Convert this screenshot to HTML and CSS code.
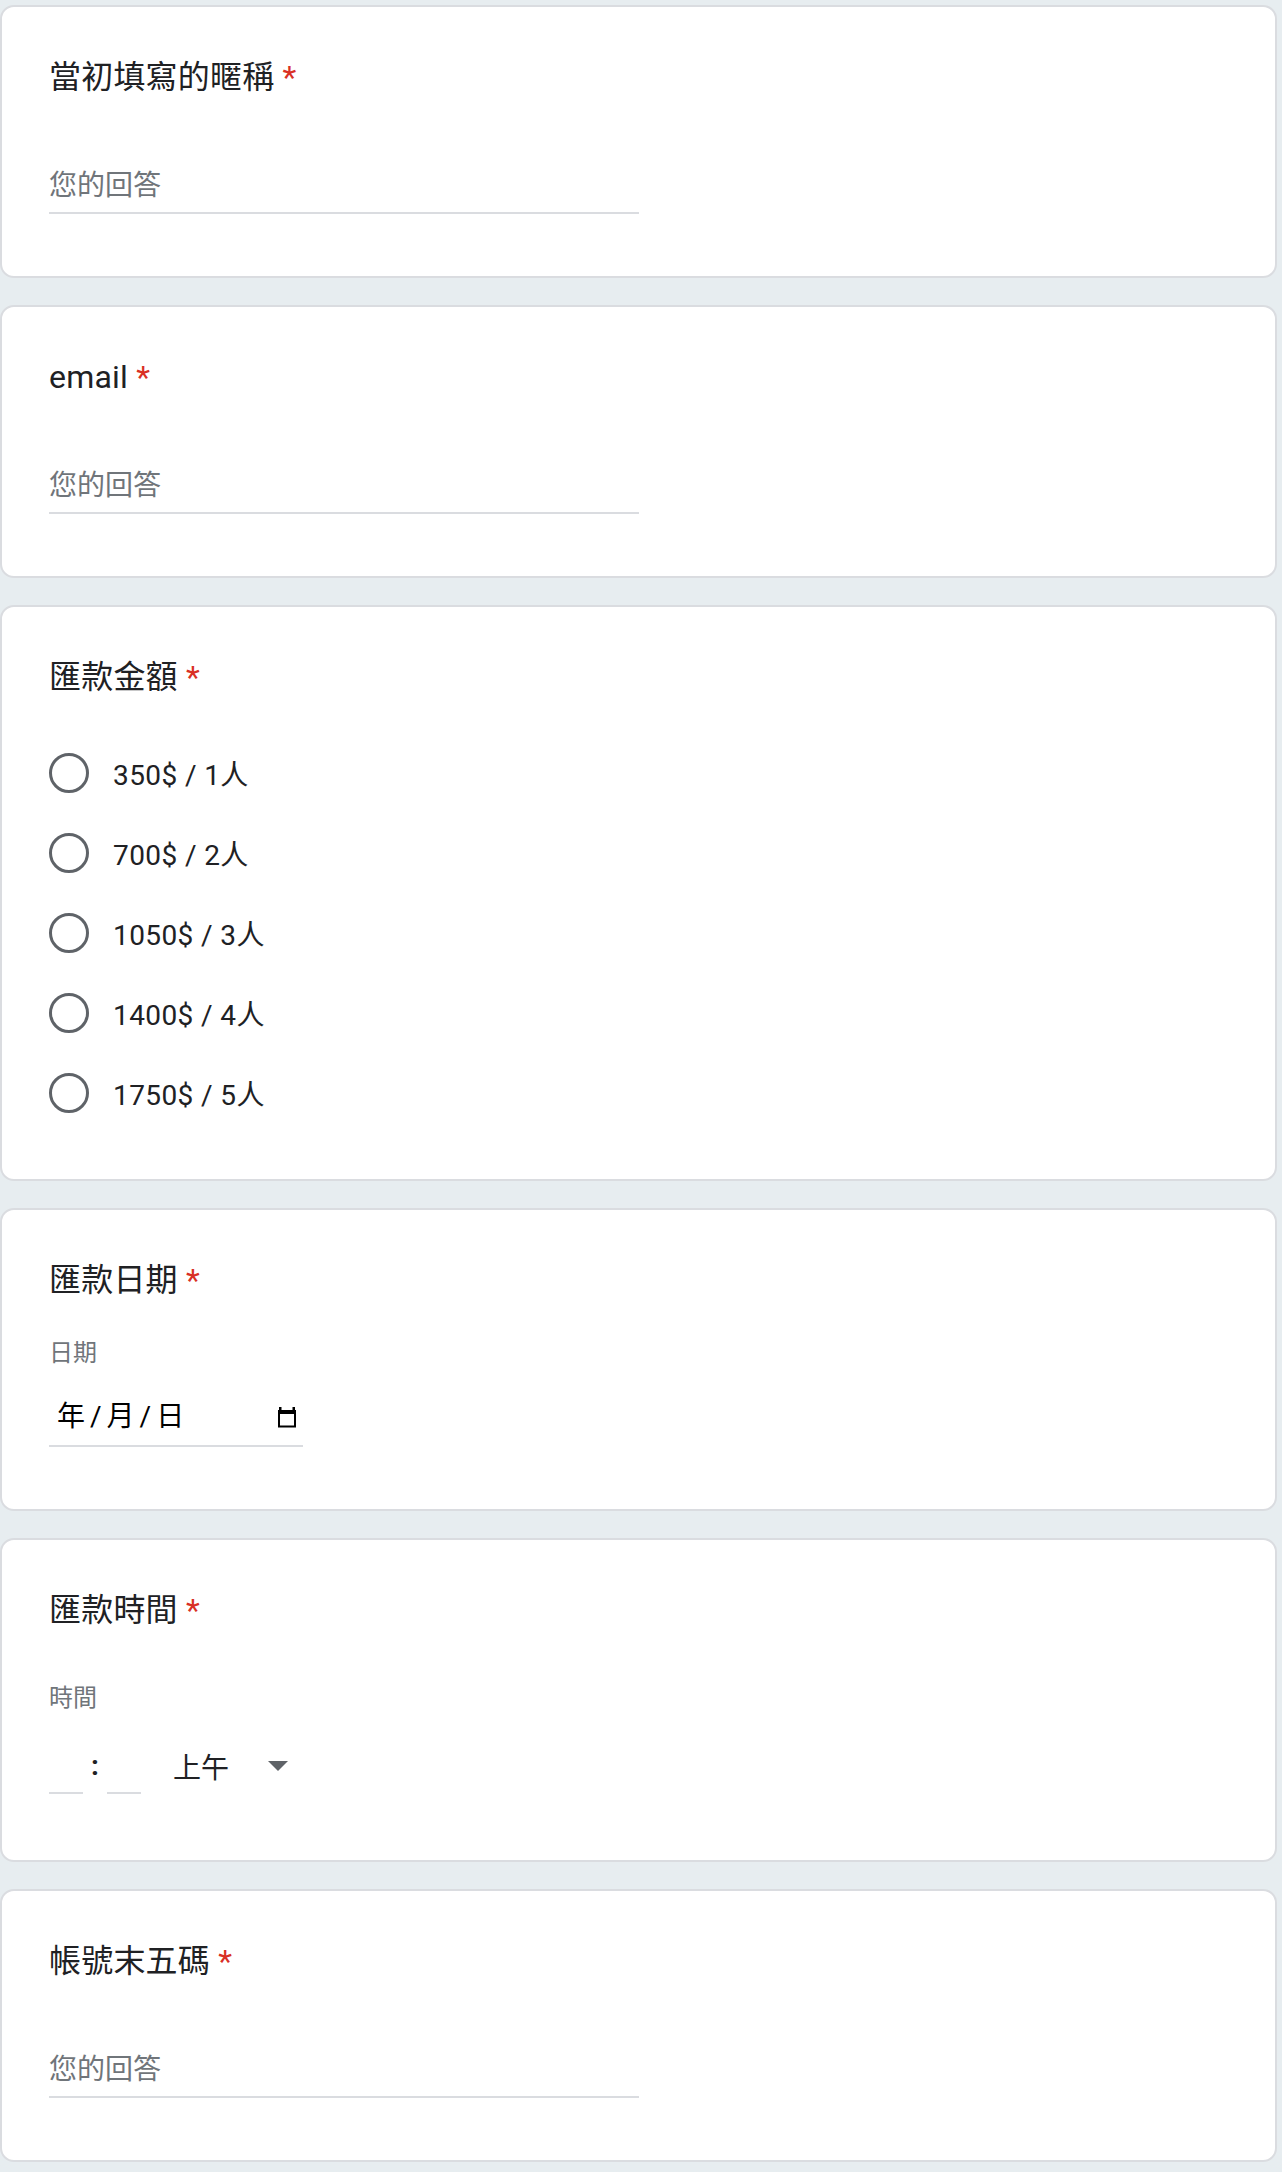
FILE: index.html
```html
<!DOCTYPE html>
<html lang="zh-Hant">
<head>
    <meta charset="UTF-8">
    <meta name="viewport" content="width=device-width, initial-scale=1.0">
    <title>匯款回報表單</title>
    <link rel="stylesheet" href="styles.css">
</head>
<body>
    <main class="form">
        <section class="card">
            <div class="q-title">當初填寫的暱稱<span class="req"> *</span></div>
            <input class="text-answer" type="text" placeholder="您的回答">
        </section>

        <section class="card">
            <div class="q-title">email<span class="req"> *</span></div>
            <input class="text-answer" type="email" placeholder="您的回答">
        </section>

        <section class="card">
            <div class="q-title">匯款金額<span class="req"> *</span></div>
            <div class="options">
                <label class="option"><span class="radio"></span><span class="option-text">350$ / 1人</span></label>
                <label class="option"><span class="radio"></span><span class="option-text">700$ / 2人</span></label>
                <label class="option"><span class="radio"></span><span class="option-text">1050$ / 3人</span></label>
                <label class="option"><span class="radio"></span><span class="option-text">1400$ / 4人</span></label>
                <label class="option"><span class="radio"></span><span class="option-text">1750$ / 5人</span></label>
            </div>
        </section>

        <section class="card">
            <div class="q-title">匯款日期<span class="req"> *</span></div>
            <div class="sub-label date-label">日期</div>
            <div class="date-field">
                <div class="date-parts">
                    <span>年</span><span class="sep">/</span><span>月</span><span class="sep">/</span><span>日</span>
                </div>
                <svg class="cal-icon" width="20" height="21" viewBox="0 0 20 21">
                    <rect x="2" y="0" width="2.5" height="4" fill="#000"/>
                    <rect x="15.5" y="0" width="2.5" height="4" fill="#000"/>
                    <rect x="1" y="3" width="18" height="4" fill="#000"/>
                    <rect x="2" y="4" width="16" height="15.5" fill="none" stroke="#000" stroke-width="2"/>
                </svg>
            </div>
        </section>

        <section class="card">
            <div class="q-title">匯款時間<span class="req"> *</span></div>
            <div class="sub-label time-label">時間</div>
            <div class="time-row">
                <input class="time-box" type="text">
                <span class="colon">:</span>
                <input class="time-box" type="text">
                <div class="ampm">
                    <span>上午</span>
                    <svg class="caret" width="20" height="10" viewBox="0 0 20 10">
                        <polygon points="0,0 20,0 10,10" fill="#5f6368"/>
                    </svg>
                </div>
            </div>
        </section>

        <section class="card">
            <div class="q-title">帳號末五碼<span class="req"> *</span></div>
            <input class="text-answer" type="text" placeholder="您的回答">
        </section>
    </main>
</body>
</html>
```

FILE: styles.css
```css
body {
    margin: 0;
    background-color: #e7edf0;
    font-family: Roboto, "Noto Sans CJK TC", sans-serif;
    color: #202124;
}

.form {
    display: flex;
    flex-direction: column;
    gap: 27px;
    padding: 5px 0 8px;
}

.card {
    width: 1277px;
    box-sizing: border-box;
    background-color: #fff;
    border: 2px solid #dadce0;
    border-radius: 14px;
    padding: 46px 47px;
}

.q-title {
    font-size: 32px;
    line-height: 48px;
    letter-spacing: 0.2px;
}

.req {
    color: #d93025;
}

.text-answer {
    display: block;
    width: 590px;
    height: 40px;
    margin: 64px 0 16px;
    padding: 0 0 7px;
    border: none;
    border-bottom: 2px solid #dadce0;
    outline: none;
    font-family: inherit;
    font-size: 28px;
    color: #202124;
    background: transparent;
}

.text-answer::placeholder {
    color: #70757a;
}

/* radio list */
.options {
    margin-top: 32px;
}

.option {
    display: flex;
    align-items: center;
    height: 80px;
}

.radio {
    width: 40px;
    height: 40px;
    box-sizing: border-box;
    border: 3px solid #5f6368;
    border-radius: 50%;
    flex-shrink: 0;
}

.option-text {
    margin-left: 24px;
    font-size: 28px;
    letter-spacing: 0.4px;
}

.sub-label {
    font-size: 24px;
    line-height: 32px;
    color: #70757a;
}

.date-label {
    margin-top: 33px;
}

.time-label {
    margin-top: 48px;
}

/* date */
.date-field {
    display: flex;
    align-items: center;
    justify-content: space-between;
    box-sizing: border-box;
    width: 254px;
    height: 50px;
    margin: 28px 0 16px;
    padding: 0 6px 8px 8px;
    border-bottom: 2px solid #dadce0;
    font-size: 28px;
    color: #000;
}

.date-parts {
    display: flex;
    line-height: 40px;
}

.sep {
    margin: 0 5px;
}

.cal-icon {
    display: block;
}

/* time */
.time-row {
    display: flex;
    align-items: flex-start;
    margin: 32px 0 20px;
}

.time-box {
    width: 34px;
    height: 40px;
    padding: 0 0 6px;
    border: none;
    border-bottom: 2px solid #dadce0;
    outline: none;
    font-family: inherit;
    font-size: 28px;
    background: transparent;
}

.colon {
    width: 24px;
    text-align: center;
    font-size: 28px;
    font-weight: 700;
    line-height: 40px;
}

.ampm {
    display: flex;
    align-items: center;
    height: 40px;
    margin-left: 32px;
    font-size: 28px;
}

.caret {
    display: block;
    margin-left: 39px;
}
```
